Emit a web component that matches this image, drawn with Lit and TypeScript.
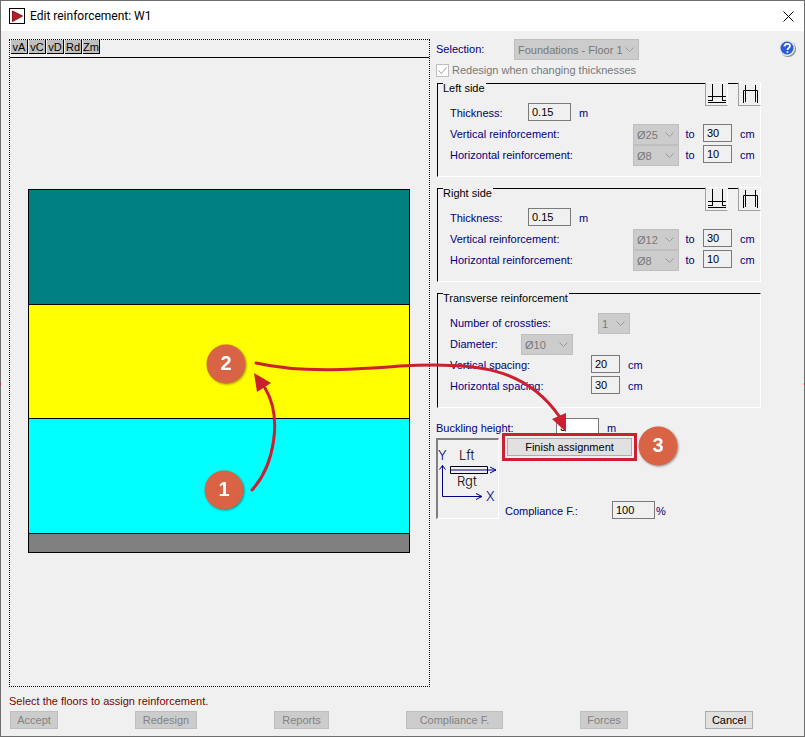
import { LitElement, html, svg, css } from "lit";
import { customElement } from "lit/decorators.js";

const floors = [
  { name: "Floor 3", color: "#008080", height: 115 },
  { name: "Floor 2", color: "#ffff00", height: 114 },
  { name: "Floor 1", color: "#00ffff", height: 115 },
  { name: "Foundations", color: "#808080", height: 19 },
];

const actions = [
  { label: "Accept", size: "s", disabled: true },
  { label: "Redesign", size: "m", disabled: true },
  { label: "Reports", size: "r", disabled: true },
  { label: "Compliance F.", size: "l", disabled: true },
  { label: "Forces", size: "s", disabled: true },
  { label: "Cancel", size: "s", disabled: false },
];

const steps = [
  { n: 1, x: 224, y: 490 },
  { n: 2, x: 226, y: 364 },
  { n: 3, x: 658, y: 446 },
];

const sides = [
  { id: "left", title: "Left side", bar: "Ø25" },
  { id: "right", title: "Right side", bar: "Ø12" },
];

@customElement("app-root")
export class AppRoot extends LitElement {
  static styles = css`
    :host {
      display: block;
      font-family: "Liberation Sans", Arial, sans-serif;
      font-size: 11px;
      line-height: 21px;
      color: #000080;
    }
    * { box-sizing: border-box; }
    button, input, select { font: inherit; margin: 0; border-radius: 0; }
    .window {
      position: relative;
      display: flex;
      flex-direction: column;
      min-height: 100vh;
      border: 1px solid #6e6e6e;
      background: #f0f0f0;
    }
    .titlebar {
      display: flex;
      align-items: center;
      height: 30px;
      padding: 0 6px 0 8px;
      background: #fff;
      color: #000;
    }
    .titlebar h1 {
      flex: 1;
      margin: 0 0 0 5px;
      font: 12px Roboto, sans-serif;
    }
    .titlebar svg { display: block; }
    .close {
      display: flex;
      padding: 4px;
      border: 0;
      background: none;
    }
    .body {
      flex: 1;
      display: grid;
      grid-template-columns: minmax(0, 1fr) 325px 29px;
      gap: 6px;
      padding: 8px 8px 7px;
    }
    .canvas {
      display: flex;
      flex-direction: column;
      border: 1px dotted #000;
    }
    .views {
      display: flex;
      gap: 1px;
      height: 18px;
      padding-left: 1px;
      border-bottom: 1px solid #000;
    }
    .views button {
      display: flex;
      justify-content: center;
      width: 17px;
      height: 14px;
      padding: 0;
      border: solid #000;
      border-width: 0 1px 1px 0;
      background: #c0c0c0;
      color: #000;
      line-height: 15px;
    }
    .stack {
      flex: 1;
      display: flex;
      flex-direction: column;
      justify-content: center;
      padding: 0 19px 2px 18px;
    }
    .wall {
      border: solid #000;
      border-width: 1px 1px 0;
    }
    .floor { border-bottom: 1px solid #000; }

    .grid { display: grid; align-items: start; }
    .selection { grid-template-columns: 78px 125px; }
    .thick { grid-template-columns: 78px 43px auto; }
    .bars { grid-template-columns: 183px 46px 22px 31px auto; }
    .bars input[type="text"] { width: 29px; justify-self: end; }
    .ties { grid-template-columns: 148px 32px; }
    .diam { grid-template-columns: 71px 52px; }
    .spacing { grid-template-columns: 141px 29px auto; }
    .buckling { grid-template-columns: 120px 43px auto; height: 20px; margin-top: 10px; }
    .compliance { grid-template-columns: 107px 43px auto; height: 18px; padding-left: 3px; }
    .unit { padding-left: 8px; }
    .percent { padding-left: 1px; }
    .to { text-align: center; }

    input[type="text"] {
      width: 100%;
      height: 18px;
      padding: 0 3px;
      border: 1px solid #7a7a7a;
      background: #f0f0f0;
      color: #000;
    }
    input[type="text"].editable { background: #fff; }
    .pick { display: grid; align-items: center; }
    .pick > * { grid-area: 1 / 1; }
    .pick select {
      appearance: none;
      width: 100%;
      height: 21px;
      padding: 0 3px;
      border: 1px solid #bfbfbf;
      background: #ccc;
      color: #787878;
      opacity: 1;
    }
    .pick svg { justify-self: end; margin-right: 5px; }
    .check {
      display: flex;
      align-items: center;
      gap: 3px;
      color: #787878;
    }
    .check input {
      appearance: none;
      width: 13px;
      height: 13px;
      margin: 0;
      border: 1px solid #bfbfbf;
      background: #fff;
    }
    .tick { display: grid; }
    .tick > * { grid-area: 1 / 1; }

    fieldset {
      position: relative;
      min-width: 0;
      margin: 0 0 11px 1px;
      padding: 19px 0 10px 12px;
      border: 1px solid;
      border-color: #000 #fff #fff #000;
    }
    .first { margin-top: 2px; }
    .last { margin-bottom: 0; }
    legend {
      height: 1px;
      margin-left: -7px;
      padding: 0 1px 0 0;
      color: #000;
      line-height: 11px;
    }
    .copy {
      position: absolute;
      top: -2px;
      right: -1px;
      display: flex;
      gap: 10px;
    }
    .copy button {
      width: 23px;
      height: 24px;
      padding: 0;
      border: 1px solid;
      border-color: #fff #fff #a0a0a0 #a0a0a0;
      background: #f0f0f0;
    }
    .copy svg { display: block; }

    .result {
      display: grid;
      grid-template-columns: 63px 1fr;
      gap: 3px;
    }
    .axes {
      height: 81px;
      border: solid;
      border-width: 2px 1px 1px 2px;
      border-color: #808080 #fff #fff #808080;
    }
    .axes svg { display: block; }
    .axes text { font: 300 13px Inter, sans-serif; }
    .side {
      display: flex;
      flex-direction: column;
      justify-content: space-between;
      align-items: flex-start;
    }
    .marked {
      position: relative;
      margin-top: -5px;
      padding: 2px;
      border: 3px solid #cc1f30;
      background: #f0f0f0;
    }
    .marked button {
      display: block;
      width: 125px;
      height: 18px;
      padding: 0;
      border: 1px solid #adadad;
      background: #e1e1e1;
      color: #000;
      line-height: 16px;
    }
    .help { justify-self: end; }
    .help button { display: block; padding: 0; border: 0; background: none; }
    .help svg { display: block; }

    footer { padding: 0 8px 7px; }
    .status {
      margin: 0 0 3px;
      color: #800000;
      line-height: 14px;
    }
    .actions {
      display: flex;
      justify-content: space-between;
      padding: 0 43px 0 1px;
    }
    .actions button {
      height: 18px;
      padding: 0;
      border: 1px solid #adadad;
      background: #e1e1e1;
      color: #000;
      line-height: 16px;
    }
    .actions button:disabled {
      border-color: #bfbfbf;
      background: #ccc;
      color: #838383;
    }
    .s { width: 48px; }
    .r { width: 55px; }
    .m { width: 62px; }
    .l { width: 97px; }

    .guide {
      position: absolute;
      top: -1px;
      left: -1px;
      pointer-events: none;
    }
    .guide text {
      font: bold 20px "Liberation Sans", sans-serif;
      text-anchor: middle;
      fill: #fff;
    }
    .badge { filter: drop-shadow(1px 1px 1px rgba(0, 0, 0, 0.4)); }
  `;

  private pick(id: string, value: string, label: string) {
    return html`<span class="pick">
      <select id=${id} disabled aria-label=${label}><option>${value}</option></select>
      <svg width="9" height="6" viewBox="0 0 9 6" fill="none" stroke="#9a9a9a"><path d="M.5 .5l4 4 4-4" /></svg>
    </span>`;
  }

  private bars(id: string, label: string, bar: string, gap: string) {
    return html`<div class="grid bars">
      <label for="${id}-d">${label}</label>
      ${this.pick(`${id}-d`, bar, label)}
      <label class="to" for="${id}-s">to</label>
      <input type="text" id="${id}-s" .value=${gap} readonly />
      <span class="unit">cm</span>
    </div>`;
  }

  private sideGroup(s: (typeof sides)[number], i: number) {
    return html`<fieldset class=${i ? "" : "first"}>
      <legend>${s.title}</legend>
      <div class="copy">
        <button aria-label="Start bars">
          <svg width="21" height="22" viewBox="0 0 21 22" fill="none" stroke="#000">
            <path d="M6.5 1v17M16.5 1v17M2 13.5h18M2 17.5h5M16 17.5h4M2 19.5h18" />
          </svg>
        </button>
        <button aria-label="End bars">
          <svg width="21" height="22" viewBox="0 0 21 22" fill="none" stroke="#000">
            <path d="M6.5 2v17M16.5 2v17M4.5 20V7.5h14V20" />
          </svg>
        </button>
      </div>
      <div class="grid thick">
        <label for="${s.id}-t">Thickness:</label>
        <input type="text" id="${s.id}-t" .value=${"0.15"} readonly />
        <span class="unit">m</span>
      </div>
      ${this.bars(`${s.id}-v`, "Vertical reinforcement:", s.bar, "30")}
      ${this.bars(`${s.id}-h`, "Horizontal reinforcement:", "Ø8", "10")}
    </fieldset>`;
  }

  private spacing(id: string, label: string, value: string) {
    return html`<div class="grid spacing">
      <label for=${id}>${label}</label>
      <input type="text" id=${id} .value=${value} readonly />
      <span class="unit">cm</span>
    </div>`;
  }

  render() {
    return html`<div class="window">
      <header class="titlebar">
        <svg width="16" height="16" viewBox="0 0 16 16">
          <rect x=".5" y=".5" width="15" height="15" fill="#fff" stroke="#000" />
          <path d="M3.5 3l10 5-10 5.500z" fill="#b3202c" stroke="#8a1520" stroke-linejoin="round" />
        </svg>
        <h1>Edit reinforcement: W1</h1>
        <button class="close" aria-label="Close">
          <svg width="11" height="11" viewBox="0 0 11 11" stroke="#000"><path d="M.5 .5l10 10M10.500 .5l-10 10" /></svg>
        </button>
      </header>

      <main class="body">
        <section class="canvas">
          <nav class="views">
            ${["vA", "vC", "vD", "Rd", "Zm"].map((v) => html`<button>${v}</button>`)}
          </nav>
          <div class="stack">
            <div class="wall">
              ${floors.map((f) => html`<div class="floor" role="img" aria-label=${f.name}
                style="height:${f.height}px;background:${f.color}"></div>`)}
            </div>
          </div>
        </section>

        <section>
          <div class="grid selection">
            <label for="sel">Selection:</label>
            ${this.pick("sel", "Foundations - Floor 1", "Selection")}
          </div>
          <label class="check">
            <span class="tick">
              <input type="checkbox" checked disabled />
              <svg width="13" height="13" viewBox="0 0 13 13" fill="none" stroke="#a0a0a0"><path d="M2.500 6.500l3 3 5-6" /></svg>
            </span>
            Redesign when changing thicknesses
          </label>
          ${sides.map((s, i) => this.sideGroup(s, i))}
          <fieldset class="last">
            <legend>Transverse reinforcement</legend>
            <div class="grid ties">
              <label for="ties">Number of crossties:</label>
              ${this.pick("ties", "1", "Number of crossties")}
            </div>
            <div class="grid diam">
              <label for="diam">Diameter:</label>
              ${this.pick("diam", "Ø10", "Diameter")}
            </div>
            ${this.spacing("vs", "Vertical spacing:", "20")}
            ${this.spacing("hs", "Horizontal spacing:", "30")}
          </fieldset>
          <div class="grid buckling">
            <label for="buck">Buckling height:</label>
            <input class="editable" type="text" id="buck" .value=${"3"} />
            <span class="unit">m</span>
          </div>
          <div class="result">
            <div class="axes">
              <svg width="60" height="78" viewBox="2 2 60 78" fill="none" stroke="#000080">
                <path d="M6.500 27.500v31H45M3.500 31.500l3-4 3 4M40 55.500l6 3-6 3" />
                <path d="M14.500 28.500h37v7h-37z" stroke="#000" />
                <path d="M14 32h46M54 29l6 3-6 3" />
                <g stroke="none">
                  <text x="2" y="22" fill="#000080">Y</text>
                  <text x="50" y="63" fill="#000080">X</text>
                  <text x="23" y="22" fill="#000">Lft</text>
                  <text x="21" y="48" fill="#000">Rgt</text>
                </g>
              </svg>
            </div>
            <div class="side">
              <div class="marked"><button>Finish assignment</button></div>
              <div class="grid compliance">
                <label for="comp">Compliance F.:</label>
                <input type="text" id="comp" .value=${"100"} readonly />
                <span class="percent">%</span>
              </div>
            </div>
          </div>
        </section>

        <div class="help">
          <button aria-label="Help">
            <svg width="17" height="18" viewBox="0 0 17 18">
              <circle cx="9" cy="10" r="8" fill="#8c8c8c" />
              <circle cx="8" cy="9" r="8" fill="#e4e8f0" />
              <circle cx="8" cy="9" r="6.500" fill="#2a5cd6" />
              <path d="M5.500 7.500c0-3.500 5.500-3.500 5.500-.5 0 2-2.500 1.800-2.500 4M8.500 12.200v1.600" fill="none" stroke="#fff" stroke-width="1.800" />
            </svg>
          </button>
        </div>
      </main>

      <footer>
        <p class="status">Select the floors to assign reinforcement.</p>
        <div class="actions">
          ${actions.map((a) => html`<button class=${a.size} ?disabled=${a.disabled}>${a.label}</button>`)}
        </div>
      </footer>

      <svg class="guide" width="805" height="737" viewBox="0 0 805 737">
        <g fill="none" stroke="#cc1f30" stroke-width="3" stroke-linecap="round">
          <path d="M252 490C274 466 283 418 265 388" />
          <path d="M256 363C300 373 350 370 400 366C475 362 525 367 559 416" />
        </g>
        <g fill="#cc1f30">
          <path d="M254 373l17 10-14 9z" />
          <path d="M566 432l-14-13 14-6z" />
          <path d="M0 383h1v2H0zM804 383h1v2h-1z" />
        </g>
        ${steps.map((s) => svg`<g class="badge">
          <circle cx=${s.x} cy=${s.y} r="19.500" fill="#d96445" />
          <text x=${s.x} y=${s.y + 6}>${s.n}</text>
        </g>`)}
      </svg>
    </div>`;
  }
}
